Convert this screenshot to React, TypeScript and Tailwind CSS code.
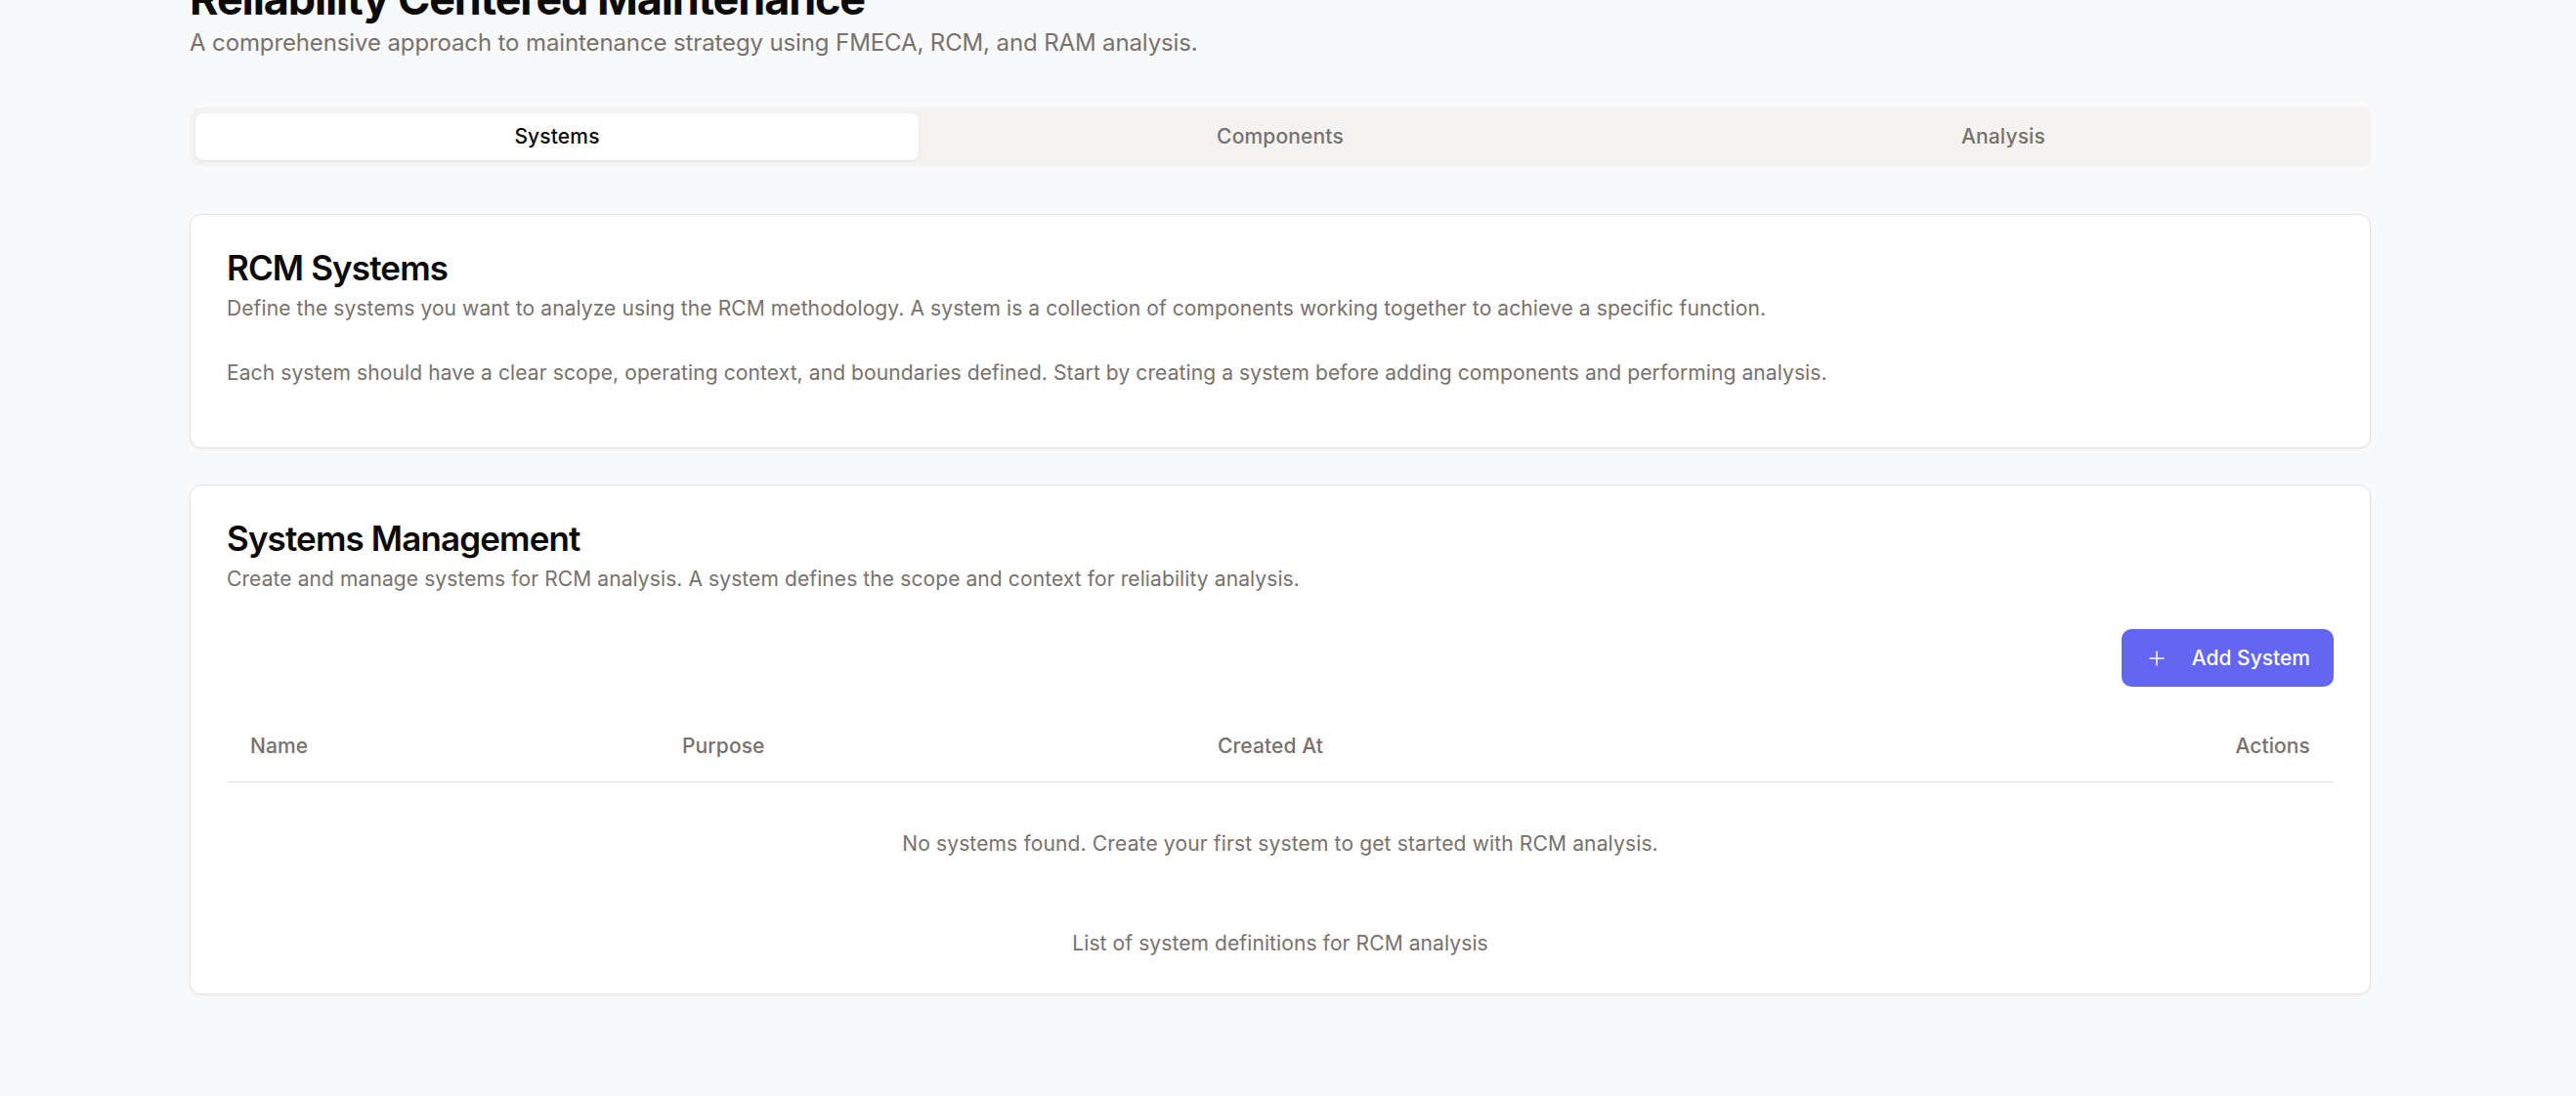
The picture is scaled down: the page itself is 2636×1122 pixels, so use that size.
import React from "react";
import { Plus } from "lucide-react";

const muted = "text-[#78716c]";

function Tabs() {
  const tabs = ["Systems", "Components", "Analysis"];
  return (
    <div className="mt-[48px] grid h-[60px] grid-cols-3 rounded-[10px] bg-[#f4f3f1] p-[6px]">
      {tabs.map((t, i) => (
        <div
          key={t}
          className={
            i === 0
              ? "flex items-center justify-center rounded-[8px] bg-white text-[21px] font-medium tracking-[0.15px] text-[#0c0a09] shadow-[0_1px_3px_rgba(0,0,0,0.08)]"
              : `flex items-center justify-center text-[21px] font-medium tracking-[0.15px] ${muted}`
          }
        >
          {t}
        </div>
      ))}
    </div>
  );
}

export default function App() {
  return (
    <div
      className="min-h-screen bg-[#f8f9fb] overflow-hidden"
      style={{ fontFamily: "Inter, 'Noto Sans', sans-serif" }}
    >
      <div className="ml-[194px] w-[2232px]">
        <h1 className="mt-[-28px] text-[45px] font-bold leading-[54px] tracking-tight text-[#0c0a09]">
          Reliability Centered Maintenance
        </h1>
        <p className={`text-[24px] leading-[36px] tracking-[-0.12px] ${muted}`}>
          A comprehensive approach to maintenance strategy using FMECA, RCM, and RAM analysis.
        </p>

        <Tabs />

        {/* Card 1 */}
        <div className="mt-[49px] rounded-[12px] border border-[#e5e4e2] bg-white px-[37px] pt-[36px] pb-[61px] shadow-[0_1px_3px_rgba(0,0,0,0.06)]">
          <h2 className="text-[35px] font-semibold leading-[36px] tracking-tight text-[#0c0a09]">
            RCM Systems
          </h2>
          <p className={`mt-[9px] text-[21px] leading-[30px] tracking-[0.1px] ${muted}`}>
            Define the systems you want to analyze using the RCM methodology. A system is a collection of components working together to achieve a specific function.
          </p>
          <p className={`mt-[36px] text-[21px] leading-[30px] tracking-[0.1px] ${muted}`}>
            Each system should have a clear scope, operating context, and boundaries defined. Start by creating a system before adding components and performing analysis.
          </p>
        </div>

        {/* Card 2 */}
        <div className="mt-[37px] rounded-[12px] border border-[#e5e4e2] bg-white px-[37px] pt-[36px] pb-[36px] shadow-[0_1px_3px_rgba(0,0,0,0.06)]">
          <h2 className="text-[35px] font-semibold leading-[36px] tracking-tight text-[#0c0a09]">
            Systems Management
          </h2>
          <p className={`mt-[9px] text-[21px] leading-[30px] tracking-[0.1px] ${muted}`}>
            Create and manage systems for RCM analysis. A system defines the scope and context for reliability analysis.
          </p>

          <div className="mt-[36px] flex justify-end">
            <button className="flex h-[59px] items-center gap-[24px] rounded-[10px] bg-[#6366f1] px-[24px] text-[21px] font-medium text-white">
              <Plus size={24} strokeWidth={1.5} />
              <span>Add System</span>
            </button>
          </div>

          <div className="mt-[24px]">
            <div className={`grid h-[74px] grid-cols-[442px_548px_1fr_auto] items-center border-b border-[#e5e4e2] text-[21px] font-medium tracking-[0.1px] ${muted}`}>
              <div className="px-[24px]">Name</div>
              <div className="px-[24px]">Purpose</div>
              <div className="px-[24px]">Created At</div>
              <div className="px-[24px] text-right">Actions</div>
            </div>
            <div className={`flex h-[126px] items-center justify-center text-[21px] tracking-[0.15px] ${muted}`}>
              No systems found. Create your first system to get started with RCM analysis.
            </div>
            <p className={`mt-[24px] text-center text-[21px] leading-[30px] tracking-[0.1px] ${muted}`}>
              List of system definitions for RCM analysis
            </p>
          </div>
        </div>
      </div>
    </div>
  );
}
